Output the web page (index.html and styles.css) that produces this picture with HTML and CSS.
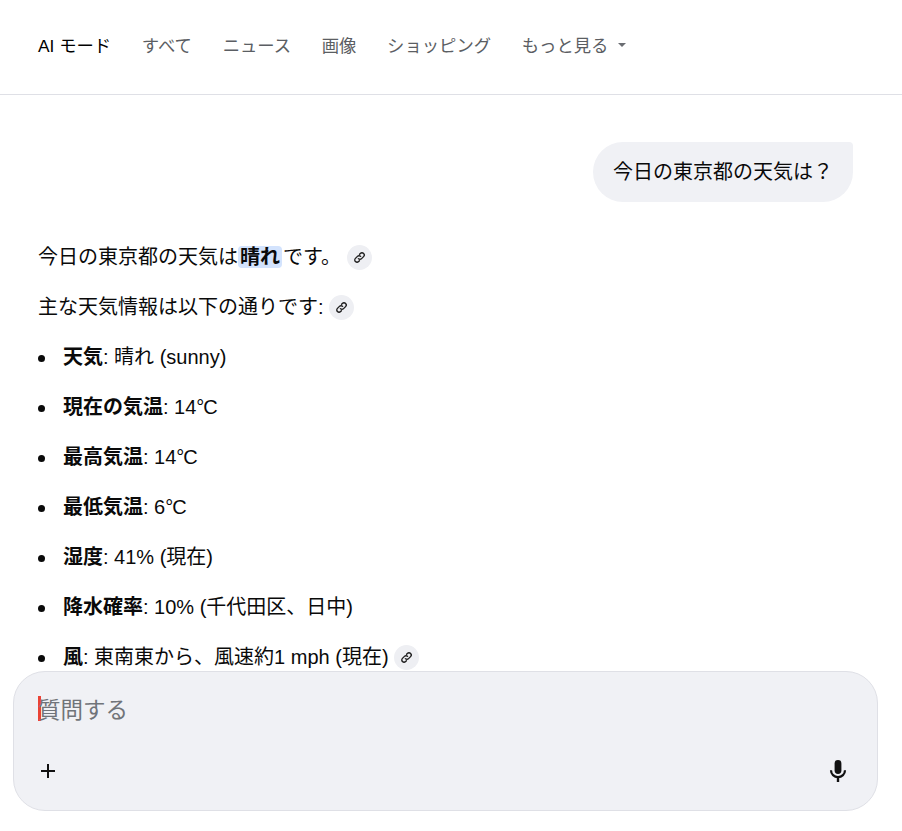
FILE: index.html
```html
<!DOCTYPE html>
<html lang="ja">
<head>
  <meta charset="utf-8">
  <title>AI モード</title>
  <link rel="stylesheet" href="styles.css">
</head>
<body>
  <svg class="sprite" width="0" height="0">
    <symbol id="icon-link" viewBox="0 0 24 24">
      <path fill="none" stroke="currentColor" stroke-width="2.2" stroke-linecap="round" d="M10.2 13.8a3.6 3.6 0 0 0 5.1 0l3.2-3.2a3.6 3.6 0 0 0-5.1-5.1l-1.3 1.3M13.8 10.2a3.6 3.6 0 0 0-5.1 0l-3.2 3.2a3.6 3.6 0 0 0 5.1 5.1l1.3-1.3"/>
    </symbol>
  </svg>

  <header class="nav">
    <a class="nav-item nav-active">AI モード</a>
    <a class="nav-item">すべて</a>
    <a class="nav-item">ニュース</a>
    <a class="nav-item">画像</a>
    <a class="nav-item">ショッピング</a>
    <a class="nav-item">もっと見る<span class="nav-caret"></span></a>
  </header>

  <main class="chat">
    <div class="question">
      <div class="bubble">今日の東京都の天気は？</div>
    </div>

    <p class="line">今日の東京都の天気は<b class="mark">晴れ</b>です。<span class="chip chip-wide"><svg><use href="#icon-link"/></svg></span></p>
    <p class="line">主な天気情報は以下の通りです:<span class="chip"><svg><use href="#icon-link"/></svg></span></p>

    <ul class="facts">
      <li><b>天気</b>: 晴れ (sunny)</li>
      <li><b>現在の気温</b>: 14<span class="deg">°C</span></li>
      <li><b>最高気温</b>: 14<span class="deg">°C</span></li>
      <li><b>最低気温</b>: 6<span class="deg">°C</span></li>
      <li><b>湿度</b>: 41% (現在)</li>
      <li><b>降水確率</b>: 10% (千代田区、日中)</li>
      <li><b>風</b>: 東南東から、風速約1 mph (現在)<span class="chip"><svg><use href="#icon-link"/></svg></span></li>
    </ul>
  </main>

  <form class="composer">
    <div class="composer-input"><span class="caret"></span><span class="placeholder">質問する</span></div>
    <div class="composer-tools">
      <svg class="icon-plus" viewBox="0 0 16 16"><path d="M8 1v14M1 8h14" fill="none" stroke="currentColor" stroke-width="2"/></svg>
      <svg class="icon-mic" viewBox="0 0 24 24">
        <rect x="8.6" y="1" width="6.8" height="14" rx="3.4" fill="currentColor"/>
        <path d="M5 11.2a7 7 0 0 0 14 0" fill="none" stroke="currentColor" stroke-width="2.2"/>
        <path d="M12 17.5V23" fill="none" stroke="currentColor" stroke-width="2.4"/>
      </svg>
    </div>
  </form>
</body>
</html>
```

FILE: styles.css
```css
/* Global styling */

html, body {
  margin: 0;
  height: 100%;
  background: #fff;
  color: #0a0a0a;
  font-family: "Liberation Sans", "Noto Sans CJK JP", sans-serif;
  overflow: hidden;
}

.sprite {
  position: absolute;
}

/* Top tabs */

.nav {
  height: 88px;
  padding: 0 38px 6px;
  display: flex;
  align-items: center;
  gap: 30.7px;
  border-bottom: 1px solid #dfe0e6;
  font-size: 17.33px;
  color: #5b5e63;
}

.nav-active {
  color: #000;
}

.nav-item {
  display: flex;
  align-items: center;
}

.nav-caret {
  margin-left: 10px;
  margin-top: 2px;
  border-left: 4px solid transparent;
  border-right: 4px solid transparent;
  border-top: 4px solid #6a6d72;
}

/* Conversation */

.chat {
  padding: 47px 49px 0 38px;
  font-size: 20px;
  line-height: 30px;
}

.question {
  display: flex;
  justify-content: flex-end;
  margin-bottom: 40px;
}

.bubble {
  padding: 15px 20px;
  background: #f0f1f5;
  border-radius: 30px 4px 30px 30px;
}

.line {
  margin: 0 0 20px;
}

.mark {
  background: #d3e3fd;
  border-radius: 4px;
  padding: 0 2px;
  margin: 0 1px 0 0;
}

.facts {
  margin: 0;
  padding: 0 0 0 25px;
  list-style: none;
}

.facts li {
  margin-bottom: 20px;
}

.facts li::before {
  content: '';
  display: inline-block;
  width: 7px;
  height: 7px;
  margin: 0 18px 0 -25px;
  border-radius: 50%;
  background: #0a0a0a;
  vertical-align: 2px;
}

.deg {
  letter-spacing: -1px;
}

/* margins cancel the height so the chip does not grow its line */
.chip {
  display: inline-flex;
  align-items: center;
  justify-content: center;
  width: 25px;
  height: 25px;
  margin: -6px 0 -4px 5px;
  border-radius: 50%;
  background: #eeeff3;
  color: #1f1f1f;
  vertical-align: middle;
}

.chip-wide {
  margin-left: 6px;
}

.chip svg {
  width: 15px;
  height: 15px;
}

/* Input box, sits over the conversation */

.composer {
  position: absolute;
  left: 13px;
  top: 671px;
  width: 865px;
  height: 140px;
  box-sizing: border-box;
  padding: 21px 24px 0 24px;
  background: #f0f1f5;
  border: 1px solid #dfe0e6;
  border-radius: 32px;
}

.composer-input {
  display: flex;
  align-items: center;
  height: 30px;
  font-size: 22.5px;
  color: #707479;
}

.caret {
  width: 3px;
  height: 25px;
  margin-right: -3px;
  background: #ea4335;
}

.composer-tools {
  display: flex;
  justify-content: space-between;
  align-items: center;
  margin-top: 36px;
  padding: 0 3px 0 2px;
  color: #111;
}

.icon-plus {
  width: 16px;
  height: 16px;
}

.icon-mic {
  width: 24px;
  height: 24px;
}
```
